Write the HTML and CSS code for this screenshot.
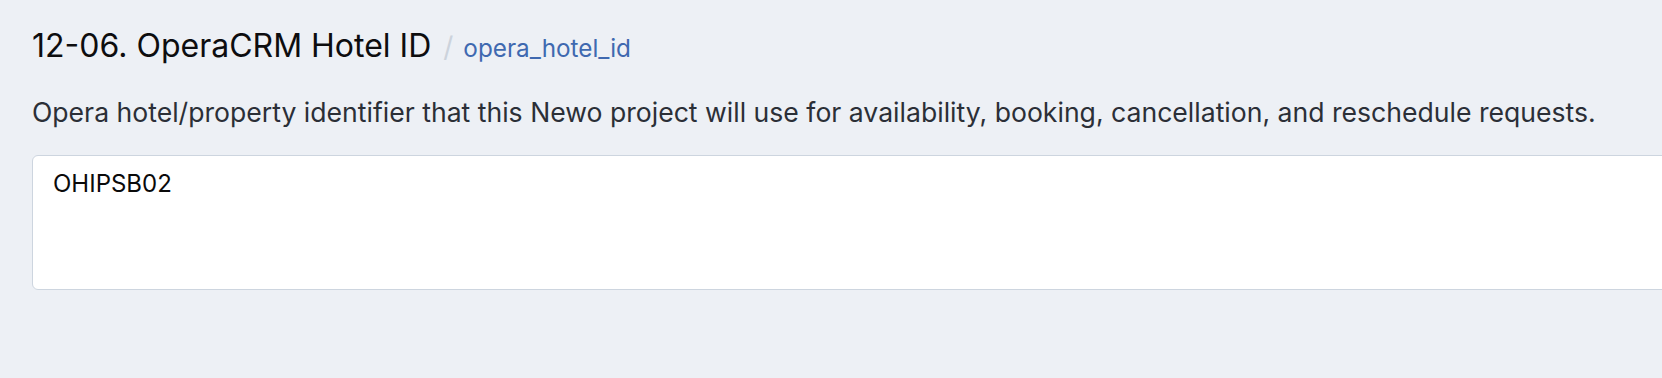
FILE: index.html
```html
<!DOCTYPE html>
<html lang="en">
<head>
<meta charset="utf-8">
<title>OperaCRM Hotel ID</title>
<link rel="stylesheet" href="styles.css">
</head>
<body>
<section class="field">
  <h2 class="field-title">
    <span class="field-name">12-06. OperaCRM Hotel ID</span>
    <span class="field-sep">/</span>
    <span class="field-key">opera_hotel_id</span>
  </h2>
  <p class="field-desc">Opera hotel/property identifier that this Newo project will use for availability, booking, cancellation, and reschedule requests.</p>
  <textarea class="field-input">OHIPSB02</textarea>
</section>
</body>
</html>
```

FILE: styles.css
```css
html, body {
  margin: 0;
  padding: 0;
  background: #edf0f5;
  overflow: hidden;
}
body {
  font-family: Inter, "Liberation Sans", sans-serif;
  color: #111;
}
.field {
  padding: 27px 0 0 32px;
}
.field-title {
  margin: 0;
  display: flex;
  align-items: baseline;
  font-weight: 400;
  font-size: 32px;
  line-height: 38px;
  color: #0d0d0f;
}
.field-sep {
  margin: 0 10px 0 12px;
  color: #ccd3dc;
  font-size: 28px;
}
.field-key {
  color: #3f69b0;
  font-size: 24.3px;
}
.field-desc {
  margin: 29px 0 0 0;
  font-size: 26.6px;
  line-height: 32px;
  color: #2b2f37;
}
.field-input {
  display: block;
  box-sizing: border-box;
  margin-top: 27px;
  width: 1700px;
  height: 135px;
  padding: 13px 20px;
  border: 1.5px solid #cdd5df;
  border-radius: 6px;
  background: #fff;
  font-family: Inter, "Liberation Sans", sans-serif;
  font-size: 24px;
  line-height: 30px;
  color: #0a0a0a;
  resize: none;
  outline: none;
}
```
